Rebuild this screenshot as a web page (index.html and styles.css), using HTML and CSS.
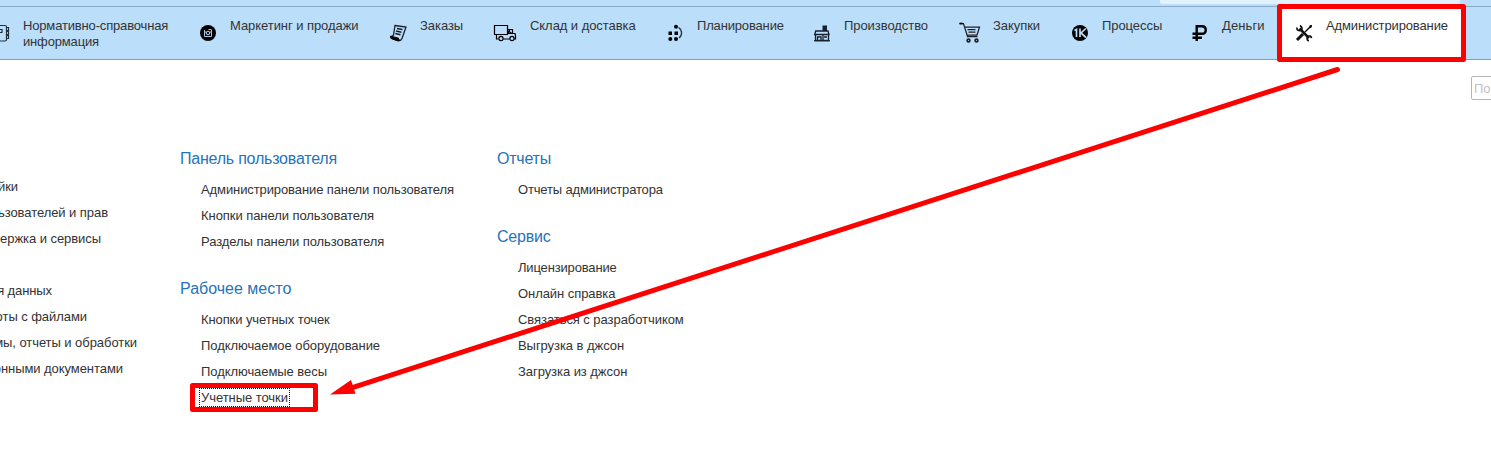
FILE: index.html
```html
<!DOCTYPE html>
<html lang="ru">
<head>
<meta charset="utf-8">
<title>Администрирование</title>
<link rel="stylesheet" href="styles.css">
</head>
<body>
<div class="app">
  <header class="topbar"><div class="topbar-field"></div></header>
  <nav class="sections">
    <a class="section wide"><svg class="icon" viewBox="0 0 24 24"><path d="M5 4.500h11q1.500 0 1.500 1.500v12.500q0 1.500-1.500 1.500H5M17.500 6.500h2v3h-2m0 1h2v3h-2m0 1h2v3h-2M6 8.500h7v3H6" fill="none" stroke="#222f3b" stroke-width="1.200"/></svg><span class="tight">Нормативно-справочная информация</span></a>
    <a class="section"><svg class="icon" viewBox="0 0 24 24"><circle cx="12" cy="12" r="8"/><path d="M8.500 9v6.500h7V9M8.500 11h1.500m4 0h1.500M12.500 8.500h3" fill="none" stroke="#a9c4dc"/><circle cx="12" cy="12" r="1.800" fill="#111" stroke="#bbdefb"/></svg><span>Маркетинг и продажи</span></a>
    <a class="section"><svg class="icon" viewBox="0 0 24 24"><path d="M9 4.500l11 1.500-4 11.500c-1 2-2 2.500-3.500 2L5 16.500 7.500 14z" fill="#bbdefb" stroke="#17212b" stroke-width="1.300"/><path d="M4.500 15l8 2.200q-.5 1.800 1.500 2-1 1.300-3 .5L5 17.500z" stroke="#000"/><path d="M11 7.500l5.500 1M10 10l5.500 1.200M9.300 12.500l5.200 1.300" stroke="#17212b" stroke-width="1.400"/></svg><span>Заказы</span></a>
    <a class="section"><svg class="icon truck" viewBox="0 0 24 24"><path d="M.5 4.500h13v9H.5zM13.500 8.500h5v4h-4v-3M15.500 9v2l2 1M18.500 12.500h2.500l.5 2v3.500h-2M2.500 14v4h2m5 0h6" fill="none" stroke="#000" stroke-width="1.200"/><g fill="#bbdefb" stroke="#000" stroke-width="1.200"><circle cx="7" cy="17.500" r="2.100"/><circle cx="18" cy="17.500" r="2.100"/></g></svg><span>Склад и доставка</span></a>
    <a class="section"><svg class="icon" viewBox="0 0 24 24"><circle cx="13" cy="5.800" r="2"/><path d="M5.500 10.500h3.500v3.500H5.500zM11.500 10.500H15v3.500h-3.500z"/><circle cx="7.300" cy="18" r="2"/><circle cx="13" cy="18" r="2"/><path d="M15.500 6.500c4 2.500 4 8 .5 10.500" fill="none" stroke="#263542" stroke-width="1.300"/></svg><span class="tight">Планирование</span></a>
    <a class="section"><svg class="icon" viewBox="0 0 24 24"><path d="M12.500 4.500H17V10h-4.500z" fill="#17212b"/><path d="M4.700 13.500l1-3.500H18l1 3.500zM5.500 13.500v6h13v-6M7.500 19v-3h3.500v3m2-5v5M14 16h3" fill="none" stroke="#17212b" stroke-width="1.300"/><path d="M4 19.700h16" stroke="#17212b" stroke-width="1.200"/></svg><span>Производство</span></a>
    <a class="section"><svg class="icon" viewBox="0 0 24 24"><path d="M.5 2.500h4l4 13h10M6 6h14.500l-2.500 8H8M8.500 8.500h8m-7 2.500h7" fill="none" stroke="#222" stroke-width="1.250"/><path d="M.5 2.500h3" stroke="#000" stroke-width="1.700"/><g fill="#bbdefb" stroke="#222" stroke-width="1.700"><circle cx="9.500" cy="19.500" r="1.400"/><circle cx="17.500" cy="19.500" r="1.400"/></g></svg><span>Закупки</span></a>
    <a class="section"><svg class="icon" viewBox="0 0 24 24"><circle cx="12" cy="12" r="8"/><path d="M6.500 9.500l2-1V16M12 7.500V16M17.800 7.500L13 12l5 4.500" fill="none" stroke="#bbdefb" stroke-width="1.700"/></svg><span>Процессы</span></a>
    <a class="section"><svg class="icon" viewBox="0 0 24 24"><path d="M8.700 20V5.300h5.300c5 0 5 7.500 0 7.500H4.500M4.500 16.700h9.500" fill="none" stroke="#000" stroke-width="2.400"/></svg><span class="loose">Деньги</span></a>
    <a class="section"><svg class="icon" viewBox="0 0 24 24"><path d="M7.500 7.500l9.500 9.500" stroke="#111" stroke-width="2.500"/><path d="M19.500 4.500L13 11" stroke="#111" stroke-width="1.500"/><path d="M11 13l-6 6" stroke="#111" stroke-width="3"/><path d="M4.800 6.500c0 3 2 3.500 4 2.800s1.500-3.500-.8-4.800M19.500 17.200c-.2-2.200-2-2.700-3.500-1.700s-1.200 3.500.8 4.500" fill="none" stroke="#111" stroke-width="1.700"/><path d="M17.500 4.500l2.500-.5-.5 2.500-2 1z"/></svg><span>Администрирование</span></a>
  </nav>
  <main class="content">
    <section class="col col-first">
      <ul class="links clipped">
        <li class="w18">йки</li><li class="w108">ьзователей и прав</li><li class="w101">ержка и сервисы</li>
      </ul>
      <ul class="links clipped">
        <li class="w52">я данных</li><li class="w87">оты с файлами</li><li class="w137">мы, отчеты и обработки</li><li class="w123">онными документами</li>
      </ul>
    </section>
    <section class="col">
      <h2 class="tight">Панель пользователя</h2>
      <ul class="links"><li>Администрирование панели пользователя</li><li>Кнопки панели пользователя</li><li>Разделы панели пользователя</li></ul>
      <h2>Рабочее место</h2>
      <ul class="links"><li>Кнопки учетных точек</li><li>Подключаемое оборудование</li><li>Подключаемые весы</li><li><span class="focused">Учетные точки</span></li></ul>
    </section>
    <section class="col">
      <h2 class="tight">Отчеты</h2>
      <ul class="links"><li class="tight">Отчеты администратора</li></ul>
      <h2 class="tight">Сервис</h2>
      <ul class="links"><li class="tight">Лицензирование</li><li>Онлайн справка</li><li>Связаться с разработчиком</li><li>Выгрузка в джсон</li><li>Загрузка из джсон</li></ul>
    </section>
    <div class="search">Поиск</div>
  </main>
  <svg class="annotations" viewBox="0 0 1491 451"><g fill="none" stroke="#f00" stroke-width="5" stroke-linejoin="round"><rect x="1279.500" y="6.500" width="184" height="53"/><rect x="192.500" y="385.500" width="123" height="24"/><path d="M1337.500 69.500L350 388.300" stroke-linecap="round"/></g><path d="M330 394.500L351 380l4.500 13.800z" fill="#f00"/></svg>
</div>
</body>
</html>
```
FILE: styles.css
```css
* { box-sizing: border-box; }
body { margin: 0; background: #fff; color: #333; font: 13px/16px "Liberation Sans", Arial, sans-serif; }
.app { position: relative; width: 1491px; height: 451px; overflow: hidden; }
.topbar { display: flex; height: 7px; padding-left: 1160px; background: #bbdefb; border-bottom: 1px solid #8aabc7; }
.topbar-field { width: 300px; height: 4px; background: #e1f1fe; border-radius: 0 0 2px 2px; }
.sections { display: grid; grid-template-columns: 207px 190px 110px 167px 147px 149px 109px 120px 89px 184px; height: 53px; margin-left: -11px; background: #bbdefb; border-bottom: 1px solid #8a9dab; letter-spacing: -0.06px; }
.section { display: flex; gap: 12px; padding-top: 11px; white-space: nowrap; }
.section:last-child { background: #fff; padding-left: 15px; letter-spacing: -0.12px; }
.section.wide { white-space: normal; }
.section.wide span { width: 155px; }
.icon { flex: none; width: 24px; height: 24px; margin: 3px -2px 0 0; overflow: visible; }
.icon.truck { margin-left: -2px; margin-right: 0; }
.content { display: flex; align-items: flex-start; height: 391px; letter-spacing: -0.06px; }
.col { flex: none; width: 317px; padding-top: 86px; }
.col-first { width: 180px; padding-top: 114px; }
h2 { margin: 0 0 5px; font-size: 16px; font-weight: 400; line-height: 26px; letter-spacing: 0; color: #2673ba; }
h2.tight { letter-spacing: -0.22px; }
.links { margin: 0; padding: 0 0 21px 21px; list-style: none; white-space: nowrap; }
.links li { height: 26px; line-height: 26px; }
.links li:first-child { letter-spacing: -0.1px; }
.tight, .links li.tight { letter-spacing: -0.16px; }
h2.tight { letter-spacing: -0.22px; }
.loose { letter-spacing: 0.1px; }
.clipped { padding: 0 0 26px; }
.clipped li { display: flex; justify-content: flex-end; }
.w18 { width: 18px; }
.w108 { width: 108px; }
.w101 { width: 101px; }
.w52 { width: 52px; }
.w87 { width: 87px; }
.w137 { width: 137px; }
.w123 { width: 123px; }
.focused { outline: 1px dotted #111; outline-offset: 1px; }
.search { flex: none; width: 100px; height: 24px; margin: 16px 0 0 657px; padding: 0 2px; border: 1px solid #b5b5b5; border-radius: 2px; line-height: 24px; color: #c6bfc2; }
.annotations { position: absolute; inset: 0; width: 1491px; height: 451px; }
```
